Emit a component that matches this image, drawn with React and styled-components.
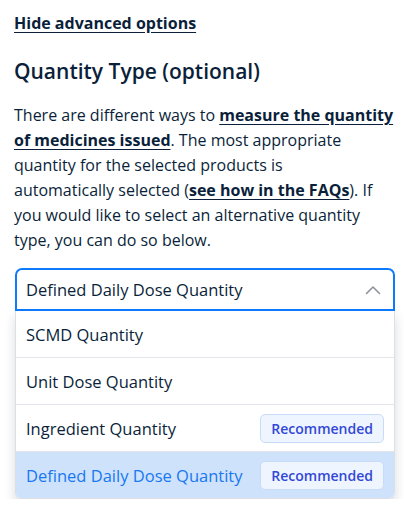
import React from 'react';
import styled, { createGlobalStyle } from 'styled-components';

const GlobalStyle = createGlobalStyle`
  body {
    margin: 0;
    background: #ffffff;
    font-family: "Open Sans", "Noto Sans", sans-serif;
    color: #0b1f3a;
  }
`;

const Page = styled.div`
  padding: 11px 9px 0 14px;
`;

const ToggleLink = styled.a`
  display: inline-block;
  font-size: 16px;
  font-weight: 700;
  line-height: 24px;
  color: #0b1f3a;
  text-decoration: underline;
  text-underline-offset: 3px;
`;

const Heading = styled.h2`
  margin: 21px 0 0;
  font-size: 21px;
  font-weight: 600;
  line-height: 30px;
`;

const Intro = styled.p`
  margin: 17px 0 15px;
  font-size: 16px;
  line-height: 25px;
  white-space: nowrap;

  a {
    color: #0b1f3a;
    font-weight: 700;
    text-decoration: underline;
    text-underline-offset: 3px;
  }
`;

const SelectWrap = styled.div`
  margin-left: 1px;
  width: 380px;
`;

const SelectBox = styled.div`
  display: flex;
  align-items: center;
  justify-content: space-between;
  height: 39px;
  padding: 0 12px 0 9px;
  border: 2px solid #0d7bff;
  border-radius: 7px 7px 0 0;
  font-size: 16.5px;
`;

const Menu = styled.ul`
  list-style: none;
  margin: 0;
  padding: 0;
  border: 1px solid #dcdfe4;
  border-top: none;
  border-radius: 0 0 6px 6px;
  overflow: hidden;
  box-shadow: 0 6px 12px rgba(15, 30, 60, 0.16);
`;

const Option = styled.li`
  display: flex;
  align-items: center;
  justify-content: space-between;
  height: 46px;
  padding: 0 10px;
  font-size: 16.5px;
  color: ${({ $selected }) => ($selected ? '#1778f2' : '#0b1f3a')};
  background: ${({ $selected }) => ($selected ? '#cfe2fb' : '#ffffff')};
  border-bottom: ${({ $last }) => ($last ? 'none' : '1px solid #e2e5ea')};
`;

const Badge = styled.span`
  display: inline-flex;
  align-items: center;
  height: 27px;
  padding: 0 10px;
  border: 1px solid #c9dcf7;
  border-radius: 5px;
  background: #eef5ff;
  color: #3348d6;
  font-size: 14px;
  font-weight: 600;
`;

const Chevron = () => (
  <svg width="16" height="10" viewBox="0 0 16 10" fill="none">
    <polyline points="1.5,8.5 8,2 14.5,8.5" stroke="#8d939c" strokeWidth="1.6" strokeLinecap="round" strokeLinejoin="round" />
  </svg>
);

const options = [
  { label: 'SCMD Quantity' },
  { label: 'Unit Dose Quantity' },
  { label: 'Ingredient Quantity', recommended: true },
  { label: 'Defined Daily Dose Quantity', recommended: true, selected: true },
];

export default function App() {
  return (
    <>
      <GlobalStyle />
      <Page>
        <ToggleLink href="#">Hide advanced options</ToggleLink>
        <Heading>Quantity Type (optional)</Heading>
        <Intro>
          There are different ways to <a href="#">measure the quantity</a>
          <br />
          <a href="#">of medicines issued</a>. The most appropriate
          <br />
          quantity for the selected products is
          <br />
          automatically selected (<a href="#">see how in the FAQs</a>). If
          <br />
          you would like to select an alternative quantity
          <br />
          type, you can do so below.
        </Intro>
        <SelectWrap>
          <SelectBox>
            <span>Defined Daily Dose Quantity</span>
            <Chevron />
          </SelectBox>
          <Menu>
            {options.map((o, i) => (
              <Option key={o.label} $selected={o.selected} $last={i === options.length - 1}>
                <span>{o.label}</span>
                {o.recommended && <Badge>Recommended</Badge>}
              </Option>
            ))}
          </Menu>
        </SelectWrap>
      </Page>
    </>
  );
}
